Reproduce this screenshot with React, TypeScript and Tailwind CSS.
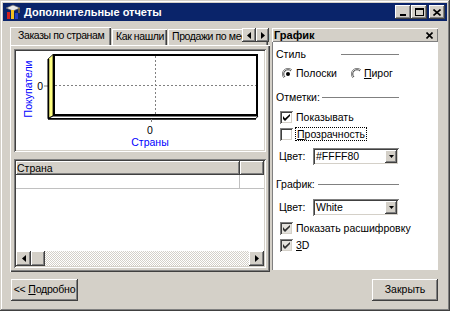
import React from "react";

const raised =
  "shadow-[inset_-1px_-1px_0_#404040,inset_1px_1px_0_#d4d0c8,inset_-2px_-2px_0_#808080,inset_2px_2px_0_#ffffff]";
const button =
  "shadow-[inset_-1px_-1px_0_#404040,inset_1px_1px_0_#ffffff,inset_-2px_-2px_0_#808080,inset_2px_2px_0_#d4d0c8]";
const sunken =
  "shadow-[inset_1px_1px_0_#808080,inset_-1px_-1px_0_#ffffff,inset_2px_2px_0_#404040,inset_-2px_-2px_0_#d4d0c8]";
const tab = "shadow-[inset_1px_1px_0_#fff,inset_-1px_0_0_#404040,inset_-2px_0_0_#808080]";

function Check({ checked, gray }: { checked?: boolean; gray?: boolean }) {
  return (
    <span
      className={`flex h-[13px] w-[13px] shrink-0 items-center justify-center ${sunken} ${
        gray ? "bg-[#e4e2dd]" : "bg-white"
      }`}
    >
      {checked && (
        <svg width="7" height="7" viewBox="0 0 7 7">
          <path d="M0 2v3l2 2 5-5V-0L2 4.5Z" fill={gray ? "#303030" : "#000"} />
        </svg>
      )}
    </span>
  );
}

function Radio({ on }: { on?: boolean }) {
  return (
    <svg width="12" height="12" viewBox="0 0 12 12" className="shrink-0">
      <circle cx="6" cy="6" r="5.5" fill="#fff" />
      <path d="M10 2A5.5 5.5 0 0 0 2 10" stroke="#808080" fill="none" />
      <path d="M9 3A4.2 4.2 0 0 0 3 9" stroke="#404040" fill="none" />
      <path d="M2 10A5.5 5.5 0 0 0 10 2" stroke="#fff" fill="none" />
      {on && <circle cx="6" cy="6" r="2" fill="#000" />}
    </svg>
  );
}

function Select({ value }: { value: string }) {
  return (
    <div className={`flex h-[17px] w-[86px] items-center bg-white pl-[3px] pr-[2px] ${sunken}`}>
      <span className="flex-1 leading-none">{value}</span>
      <span className={`flex h-[13px] w-[12px] items-center justify-center bg-[#d4d0c8] ${button}`}>
        <svg width="5" height="3" viewBox="0 0 5 3">
          <path d="M0 0h5L2.5 3Z" fill="#000" />
        </svg>
      </span>
    </div>
  );
}

function Heading({ text, gap }: { text: string; gap: string }) {
  return (
    <div className="flex h-[13px] w-[123px] items-center">
      <span className="leading-none">{text}</span>
      <span className={`h-px flex-1 bg-[#808080] ${gap}`} />
    </div>
  );
}

function Chart() {
  return (
    <svg width="252" height="103" className="block" style={{ fontFamily: "'Liberation Sans', Arial, sans-serif" }}>
      <text x="18" y="40" fontSize="10.5" fill="#0000ff" textAnchor="middle" transform="rotate(-90 18 40)">
        Покупатели
      </text>
      <text x="29" y="41" fontSize="10.5" fill="#000" textAnchor="end">0</text>
      <line x1="30" y1="37" x2="35" y2="37" stroke="#808080" />
      <rect x="40" y="6" width="203" height="60" fill="#fff" stroke="#000" strokeWidth="2" />
      <line x1="41" y1="36.5" x2="242" y2="36.5" stroke="#808080" strokeDasharray="2 2" />
      <line x1="141.5" y1="7" x2="141.5" y2="65" stroke="#808080" strokeDasharray="2 2" />
      <polygon points="34,10 39,5.5 39,67 34,69.5" fill="#ffff80" stroke="#000" strokeWidth="0.8" />
      <line x1="34.5" y1="10" x2="34.5" y2="70" stroke="#000" strokeWidth="1.5" />
      <polygon points="39,67 244,67 242,69.5 34,69.5" fill="#fff" stroke="#000" strokeWidth="1" />
      <line x1="34" y1="70" x2="242" y2="70" stroke="#000" strokeWidth="1.5" />
      <line x1="137.5" y1="70" x2="137.5" y2="73" stroke="#808080" />
      <text x="136" y="85" fontSize="10.5" fill="#000" textAnchor="middle">0</text>
      <text x="136" y="97" fontSize="10.5" fill="#0000ff" textAnchor="middle">Страны</text>
    </svg>
  );
}

function AppIcon() {
  return (
    <svg width="16" height="16" viewBox="0 0 16 16" className="shrink-0">
      <path d="M1 4l7-3 7 3-7 3z" fill="#e8e8e8" stroke="#606060" strokeWidth="0.7" />
      <rect x="2" y="8" width="3" height="7" fill="#d02020" />
      <rect x="6" y="6" width="3" height="9" fill="#f0c020" />
      <rect x="10" y="9" width="3" height="6" fill="#2040c0" />
      <line x1="14" y1="4" x2="14" y2="9" stroke="#c09020" />
    </svg>
  );
}

export default function App() {
  return (
    <div
      className={`flex h-[311px] w-[450px] flex-col bg-[#d4d0c8] p-[3px] text-[10.5px] text-black font-['Liberation_Sans',Arial,sans-serif] ${raised}`}
    >
      {/* title bar */}
      <div className="flex h-[18px] shrink-0 items-center bg-[#0a246a] px-[2px]">
        <AppIcon />
        <span className="ml-[3px] text-[11px] font-bold leading-none text-white">Дополнительные отчеты</span>
        <div className="ml-auto flex items-center">
          <span className={`flex h-[14px] w-[16px] items-end justify-center bg-[#d4d0c8] pb-[3px] ${button}`}>
            <span className="h-[2px] w-[6px] bg-black" />
          </span>
          <span className={`flex h-[14px] w-[16px] items-center justify-center bg-[#d4d0c8] ${button}`}>
            <span className="h-[8px] w-[9px] border border-t-2 border-black" />
          </span>
          <span className={`ml-[2px] flex h-[14px] w-[16px] items-center justify-center bg-[#d4d0c8] ${button}`}>
            <svg width="8" height="7" viewBox="0 0 8 7">
              <path d="M0.5 0.5l7 6M7.5 0.5l-7 6" stroke="#000" strokeWidth="1.6" />
            </svg>
          </span>
        </div>
      </div>

      <div className="flex flex-1 flex-col px-[7px] pt-[6px]">
        <div className="flex h-[245px]">
          {/* tab control */}
          <div className="flex w-[260px] flex-col">
            <div className="relative z-10 flex h-[18px] items-end overflow-hidden whitespace-nowrap tracking-[-0.4px]">
              <div className={`mb-[-1px] flex h-[19px] w-[101px] shrink-0 items-center bg-[#d4d0c8] pl-[8px] pb-[1px] ${tab}`}>
                Заказы по странам
              </div>
              <div className={`ml-[1px] flex h-[16px] w-[55px] shrink-0 items-center pl-[4px] ${tab}`}>
                Как нашли
              </div>
              <div className={`ml-[1px] flex h-[16px] w-[100px] shrink-0 items-center pl-[4px] ${tab}`}>
                Продажи по месяцам
              </div>
              <div className="absolute right-[1px] top-[1px] flex bg-[#d4d0c8]">
                <span className={`flex h-[14px] w-[14px] items-center justify-center ${button}`}>
                  <svg width="4" height="7" viewBox="0 0 4 7"><path d="M4 0v7L0 3.5Z" fill="#000" /></svg>
                </span>
                <span className={`flex h-[14px] w-[13px] items-center justify-center ${button}`}>
                  <svg width="4" height="7" viewBox="0 0 4 7"><path d="M0 0v7l4-3.5Z" fill="#000" /></svg>
                </span>
              </div>
            </div>
            <div className="flex flex-1 flex-col bg-[#d4d0c8] p-[4px] shadow-[inset_1px_1px_0_#fff,inset_-1px_-1px_0_#404040,inset_-2px_-2px_0_#808080]">
              <div className={`h-[103px] w-[252px] bg-white ${sunken}`}>
                <Chart />
              </div>
              <div className={`mt-[7px] flex flex-1 flex-col bg-white p-[2px] ${sunken}`}>
                <div className="flex h-[14px]">
                  <div className={`flex w-[224px] items-center bg-[#d4d0c8] pl-[1px] leading-none ${button}`}>Страна</div>
                  <div className={`flex-1 bg-[#d4d0c8] ${button}`} />
                </div>
                <div className="flex h-[14px] border-b border-[#c0c0c0]">
                  <div className="w-[224px] border-r border-[#c0c0c0]" />
                </div>
                <div className="flex-1" />
                <div className="flex h-[15px] bg-[repeating-conic-gradient(#d4d0c8_0%_25%,#ffffff_0%_50%)] bg-[length:2px_2px]">
                  <span className={`flex w-[15px] items-center justify-center bg-[#d4d0c8] ${button}`}>
                    <svg width="4" height="7" viewBox="0 0 4 7"><path d="M4 0v7L0 3.5Z" fill="#000" /></svg>
                  </span>
                  <span className={`w-[14px] bg-[#d4d0c8] ${button}`} />
                  <span className="flex-1" />
                  <span className={`flex w-[15px] items-center justify-center bg-[#d4d0c8] ${button}`}>
                    <svg width="4" height="7" viewBox="0 0 4 7"><path d="M0 0v7l4-3.5Z" fill="#000" /></svg>
                  </span>
                </div>
              </div>
            </div>
          </div>

          {/* right panel */}
          <div className="ml-[2px] mt-[1px] mb-[2px] flex w-[166px] flex-col">
            <div className="flex h-[14px] items-center bg-[#d4d0c8] pl-[2px] pr-[5px] shadow-[inset_1px_1px_0_#fff,inset_-1px_-1px_0_#808080]">
              <span className="text-[11px] font-bold leading-none">График</span>
              <svg width="7" height="7" viewBox="0 0 7 7" className="ml-auto">
                <path d="M0.5 0.5l6 6M6.5 0.5l-6 6" stroke="#000" strokeWidth="1.6" />
              </svg>
            </div>
            <div className="flex flex-1 flex-col bg-white pl-[4px] shadow-[inset_1px_0_0_#808080]">
              <div className="mt-[6px]">
                <Heading text="Стиль" gap="ml-[35px]" />
              </div>
              <div className="mt-[6px] flex h-[13px] items-center pl-[6px]">
                <Radio on />
                <span className="ml-[2px] leading-none">Полоски</span>
                <span className="ml-[14px]"><Radio /></span>
                <span className="ml-[1px] leading-none"><u>П</u>ирог</span>
              </div>
              <div className="mt-[11px]">
                <Heading text="Отметки:" gap="ml-[2px]" />
              </div>
              <div className="mt-[7px] flex h-[13px] items-center pl-[4px]">
                <Check checked />
                <span className="ml-[3px] leading-none">Показывать</span>
              </div>
              <div className="mt-[3px] flex h-[14px] items-center pl-[4px]">
                <Check />
                <span className="ml-[2px] border border-dotted border-black px-[1px] leading-[12px]"><u>П</u>розрачность</span>
              </div>
              <div className="mt-[7px] flex h-[17px] items-center pl-[3px]">
                <span className="w-[34px] leading-none">Цвет:</span>
                <Select value="#FFFF80" />
              </div>
              <div className="mt-[13px]">
                <Heading text="График:" gap="ml-[3px]" />
              </div>
              <div className="mt-[8px] flex h-[17px] items-center pl-[3px]">
                <span className="w-[34px] leading-none">Цвет:</span>
                <Select value="White" />
              </div>
              <div className="mt-[6px] flex h-[13px] items-center pl-[4px]">
                <Check checked gray />
                <span className="ml-[3px] leading-none">Показать расшифровку</span>
              </div>
              <div className="mt-[4px] flex h-[13px] items-center pl-[4px]">
                <Check checked gray />
                <span className="ml-[3px] leading-none"><u>3</u>D</span>
              </div>
            </div>
          </div>
        </div>

        {/* bottom buttons */}
        <div className="mt-[7px] flex">
          <div className={`ml-[1px] flex h-[22px] w-[67px] items-center justify-center whitespace-pre bg-[#d4d0c8] tracking-[-0.2px] ${button}`}>
            {"<< "}<u>П</u>одробно
          </div>
          <div className={`ml-auto mr-[2px] flex h-[22px] w-[66px] items-center justify-center bg-[#d4d0c8] ${button}`}>
            Закрыть
          </div>
        </div>
      </div>
    </div>
  );
}
